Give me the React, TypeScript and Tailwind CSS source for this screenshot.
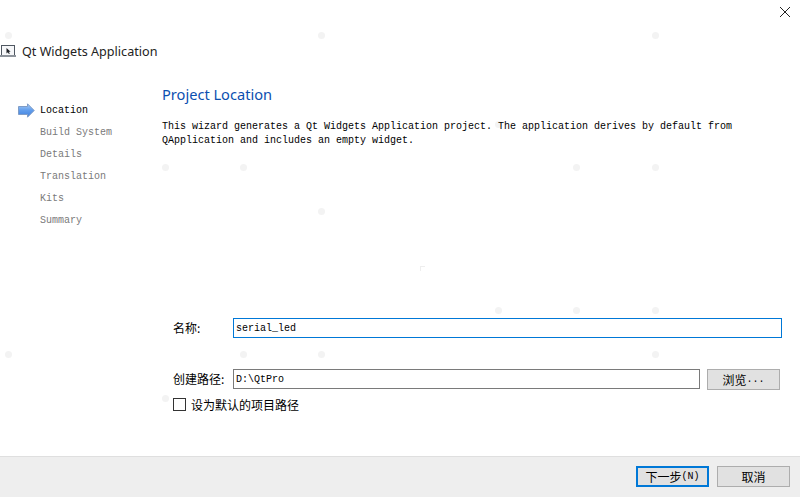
import React from "react";

const MONO = "font-['Liberation_Mono','Noto_Sans_CJK_SC',monospace] text-[10px]";
const CJK = "font-['Noto_Sans_CJK_SC',sans-serif] text-[12px]";

const dots: [number, number][] = [
  [8, 35], [321, 35], [655, 35],
  [498, 124],
  [165, 167], [243, 167], [576, 167], [655, 167],
  [321, 211],
  [498, 310], [576, 310], [655, 310],
  [8, 354], [243, 354], [321, 354], [655, 354],
  [165, 398],
];

function WizardIcon() {
  return (
    <svg width="16" height="12" viewBox="0 0 16 12" className="shrink-0">
      <rect x="1.5" y="0.5" width="13" height="10" fill="#f6f7f9" stroke="#4f5761" />
      <rect x="0" y="10" width="16" height="2" fill="#8d939b" />
      <path d="M6.5 3v5.5l1.4-1.3 1 1.8.9-.5-1-1.7h1.8z" fill="#1c1f24" />
    </svg>
  );
}

function Arrow() {
  return (
    <svg width="17" height="15" viewBox="0 0 17 15" className="shrink-0">
      <defs>
        <linearGradient id="arrowFill" x1="0" y1="0" x2="0" y2="1">
          <stop offset="0" stopColor="#a8ccf6" />
          <stop offset="0.5" stopColor="#5f9cec" />
          <stop offset="1" stopColor="#3f7fdc" />
        </linearGradient>
      </defs>
      <path d="M0.5 3.5h9V0.8L16.2 7.5 9.5 14.2v-2.7h-9z" fill="url(#arrowFill)" stroke="#7f9cc6" strokeWidth="1" />
    </svg>
  );
}

const steps = ["Build System", "Details", "Translation", "Kits", "Summary"];

function Btn({ children, primary }: { children: React.ReactNode; primary?: boolean }) {
  return (
    <div
      className={`h-[21px] w-[73px] flex items-center justify-center bg-[#e1e1e1] text-black ${CJK} ${
        primary ? "border-2 border-[#0078d7]" : "border border-[#adadad]"
      }`}
    >
      {children}
    </div>
  );
}

export default function App() {
  return (
    <div className="relative w-[800px] h-[497px] bg-white overflow-hidden flex flex-col text-black">
      {dots.map(([x, y]) => (
        <div
          key={`${x}-${y}`}
          className="absolute w-[7px] h-[7px] rounded-full bg-[#f3f3f3]"
          style={{ left: x - 3, top: y - 3 }}
        />
      ))}
      <div className="absolute left-[420px] top-[266px] w-[5px] h-[5px] border-t border-l border-[#eeeeee]" />
      <svg width="10" height="10" viewBox="0 0 10 10" className="absolute left-[780px] top-[7px]">
        <path d="M0 0l10 10M10 0L0 10" stroke="#222" strokeWidth="1" />
      </svg>

      <div className="relative h-[456px] flex flex-col">
        <div className="flex items-center gap-[6px] pt-[41px] h-[61px]">
          <WizardIcon />
          <span className="text-[12.6px] leading-[17px] text-[#222] font-['Noto_Sans',sans-serif]">Qt Widgets Application</span>
        </div>

        <div className="flex flex-1">
          <div className={`w-[162px] shrink-0 pt-[38px] pl-[18px] ${MONO}`}>
            <div className="flex items-center gap-[5px] h-[22px]">
              <Arrow />
              <span className="text-black">Location</span>
            </div>
            {steps.map((s) => (
              <div key={s} className="h-[22px] flex items-center pl-[22px] text-[#7a7a7a]">
                {s}
              </div>
            ))}
          </div>

          <div className="flex-1 pr-[19px] flex flex-col">
            <div className="pt-[23px] text-[14.6px] leading-[20px] text-[#0b4fb0] font-['Noto_Sans',sans-serif]">Project Location</div>
            <div className={`mt-[16px] leading-[14px] ${MONO} w-[620px]`}>
              This wizard generates a Qt Widgets Application project. The application derives by default from
              <br />
              QApplication and includes an empty widget.
            </div>

            <div className="mt-[170px] flex items-center h-[20px] pl-[11px]">
              <span className={`w-[60px] ${CJK}`}>名称:</span>
              <div className={`flex-1 h-[20px] border border-[#0078d7] flex items-center pl-[2px] ${MONO}`}>serial_led</div>
            </div>

            <div className="mt-[31px] flex items-start h-[20px] pl-[11px]">
              <span className={`w-[60px] leading-[20px] ${CJK}`}>创建路径:</span>
              <div className={`w-[467px] h-[20px] border border-[#7a7a7a] flex items-center pl-[2px] ${MONO}`}>D:\QtPro</div>
              <div className={`ml-[7px] w-[73px] h-[21px] flex items-center justify-center bg-[#e1e1e1] border border-[#adadad] ${CJK}`}>
                浏览<span className={`${MONO} tracking-[0px]`}>...</span>
              </div>
            </div>

            <div className="mt-[9px] flex items-center h-[13px] pl-[11px] gap-[5px]">
              <div className="w-[13px] h-[13px] border border-[#333] bg-white" />
              <span className={CJK}>设为默认的项目路径</span>
            </div>
          </div>
        </div>
      </div>

      <div className="relative flex-1 bg-[#eeeeee] border-t border-[#dfdfdf] flex items-start justify-end gap-[8px] pr-[10px] pt-[9px]">
        <Btn primary>
          下一步<span className={MONO}>(N)</span>
        </Btn>
        <Btn>取消</Btn>
      </div>
    </div>
  );
}
